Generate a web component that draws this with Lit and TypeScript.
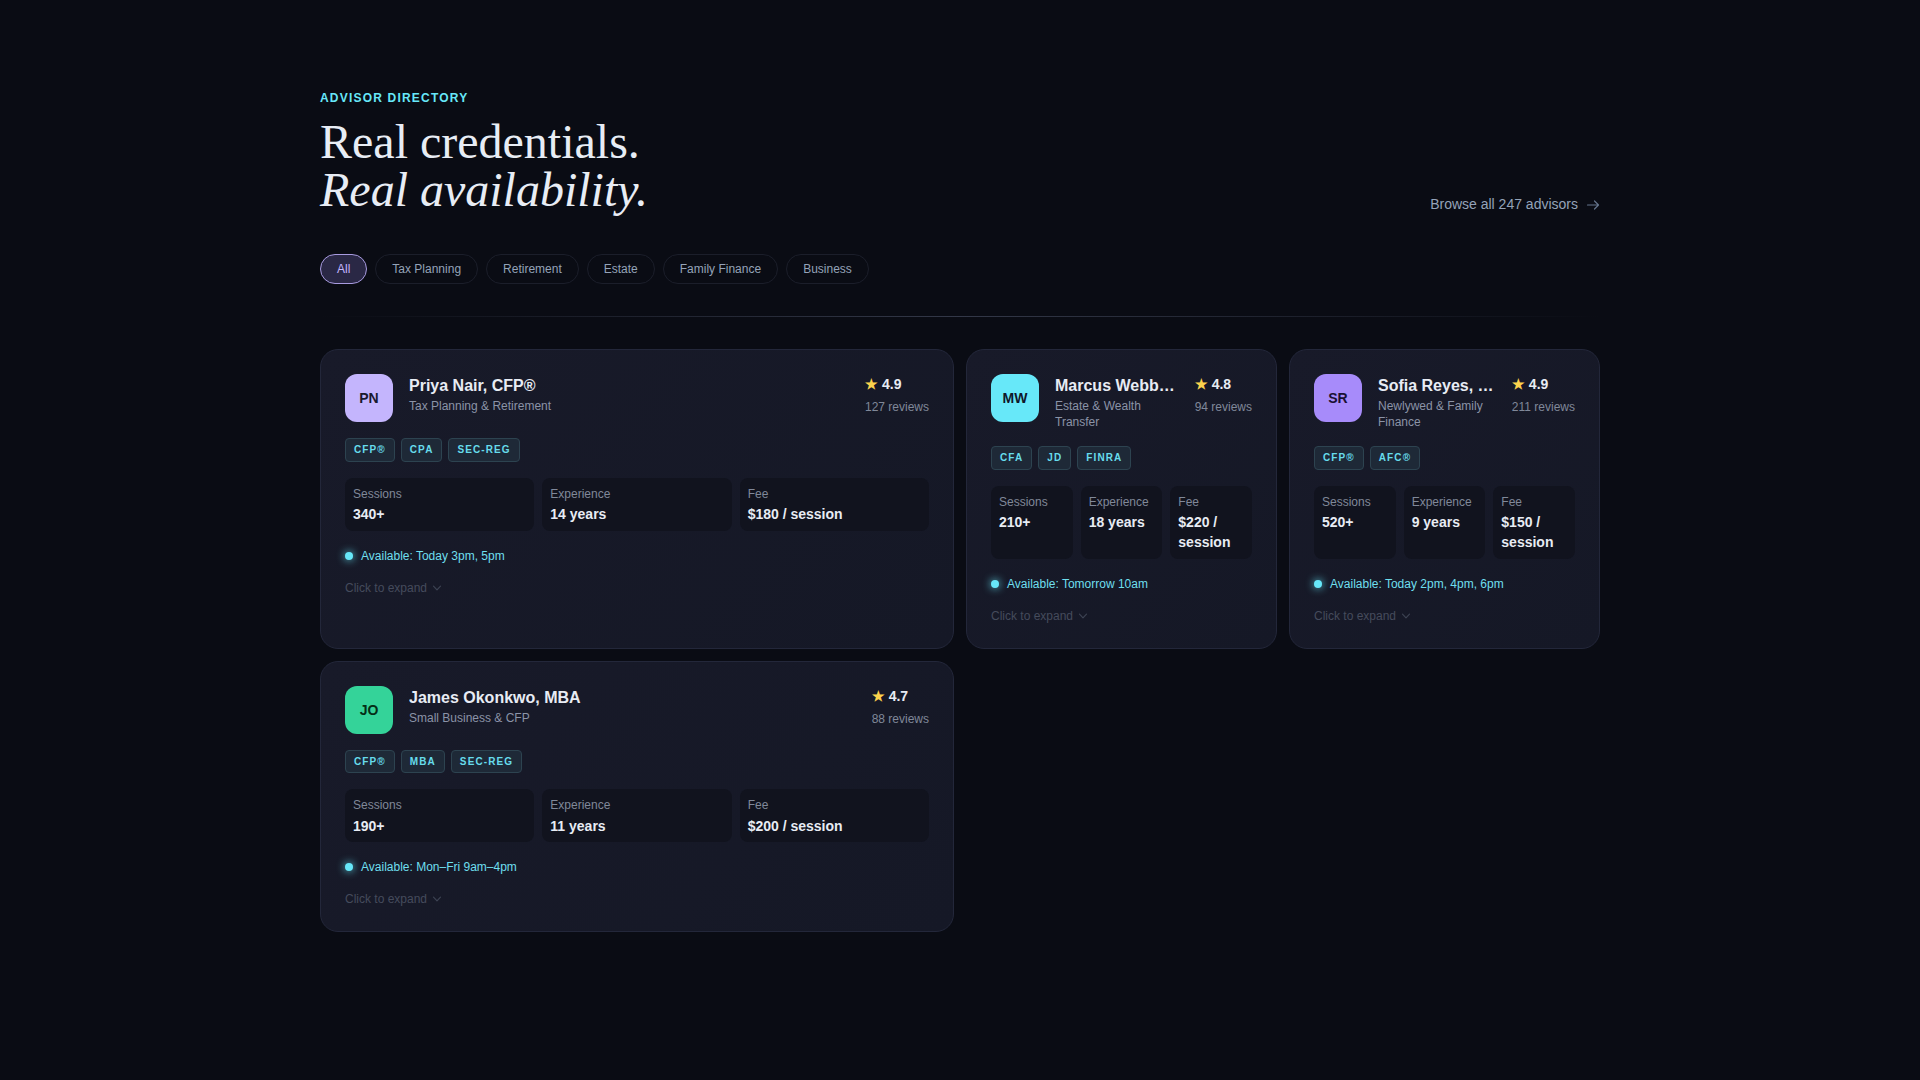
import { LitElement, html, css } from "lit";
import { customElement } from "lit/decorators.js";

interface Advisor {
  initials: string; color: string; ink: string; name: string; spec: string; rating: string; reviews: string;
  tags: string[]; sessions: string; years: string; fee: string; avail: string; wide: boolean;
}

const ADVISORS: Advisor[] = [
  { initials: "PN", color: "#c4b5fd", ink: "#1a1a2e", name: "Priya Nair, CFP®", spec: "Tax Planning & Retirement", rating: "4.9", reviews: "127 reviews", tags: ["CFP®", "CPA", "SEC-REG"], sessions: "340+", years: "14 years", fee: "$180 / session", avail: "Available: Today 3pm, 5pm", wide: true },
  { initials: "MW", color: "#67e8f9", ink: "#0f172a", name: "Marcus Webb, CFA, JD", spec: "Estate & Wealth Transfer", rating: "4.8", reviews: "94 reviews", tags: ["CFA", "JD", "FINRA"], sessions: "210+", years: "18 years", fee: "$220 / session", avail: "Available: Tomorrow 10am", wide: false },
  { initials: "SR", color: "#a78bfa", ink: "#1a1033", name: "Sofia Reyes, CFP®, AFC®", spec: "Newlywed & Family Finance", rating: "4.9", reviews: "211 reviews", tags: ["CFP®", "AFC®"], sessions: "520+", years: "9 years", fee: "$150 / session", avail: "Available: Today 2pm, 4pm, 6pm", wide: false },
  { initials: "JO", color: "#34d399", ink: "#052e16", name: "James Okonkwo, MBA", spec: "Small Business & CFP", rating: "4.7", reviews: "88 reviews", tags: ["CFP®", "MBA", "SEC-REG"], sessions: "190+", years: "11 years", fee: "$200 / session", avail: "Available: Mon–Fri 9am–4pm", wide: true },
];

const FILTERS = ["All", "Tax Planning", "Retirement", "Estate", "Family Finance", "Business"];

@customElement("app-root")
export class AppRoot extends LitElement {
  static styles = css`
    :host { display: block; min-height: 1080px; background: #0a0c14; color: #e2e8f0; font-family: "Liberation Sans", Arial, sans-serif; }
    .page { width: 1280px; margin: 0 auto; padding: 91px 0 0; }
    .top { display: flex; justify-content: space-between; align-items: flex-end; margin-bottom: 40px; }
    .eyebrow { font-size: 12px; line-height: 14px; font-weight: 700; letter-spacing: 1.2px; color: #67e8f9; margin-bottom: 13px; }
    h1 { margin: 0; font-family: "Liberation Serif", "Times New Roman", serif; font-weight: 400; font-size: 48px; line-height: 48px; color: #e8edf5; }
    h1 em { font-style: italic; display: block; }
    .browse { display: flex; align-items: center; gap: 8px; font-size: 14px; line-height: 19px; color: #94a3b8; }
    .browse svg { width: 14px; height: 14px; color: #64748b; }
    .filters { display: flex; gap: 8px; margin-bottom: 32px; }
    .pill { height: 30px; box-sizing: border-box; padding: 0 16px; display: flex; align-items: center; border-radius: 15px; border: 1px solid #1b1e2a; font-size: 12px; color: #94a3b8; }
    .pill.on { background: #2a2845; border-color: #a89be0; color: #c4b5fd; }
    .rule { height: 1px; background: linear-gradient(90deg, transparent, #333848 50%, transparent); margin-bottom: 32px; }
    .grid { display: grid; grid-template-columns: repeat(4, 1fr); gap: 12px; }
    .card { box-sizing: border-box; min-width: 0; padding: 24px; border-radius: 18px; border: 1px solid #23273a; background: linear-gradient(135deg, #181a29, #151826); }
    .card.wide { grid-column: span 2; }
    .head { display: flex; gap: 16px; align-items: flex-start; margin-bottom: 16px; }
    .avatar { flex: none; width: 48px; height: 48px; border-radius: 12px; display: flex; align-items: center; justify-content: center; font-size: 14px; font-weight: 700; }
    .who { flex: 1; min-width: 0; }
    .name { font-size: 16px; line-height: 24px; font-weight: 700; color: #e8ecf4; white-space: nowrap; overflow: hidden; text-overflow: ellipsis; }
    .spec { font-size: 12px; line-height: 16px; color: #8b93a7; }
    .score { flex: none; text-align: left; }
    .rating { display: flex; align-items: center; gap: 4px; font-size: 14px; line-height: 20px; font-weight: 700; color: #e8ecf4; margin-bottom: 5px; }
    .star { color: #fcd34d; font-size: 14px; }
    .reviews { font-size: 12px; line-height: 16px; color: #808899; }
    .tags { display: flex; gap: 6px; margin-bottom: 16px; }
    .tag { box-sizing: border-box; height: 23.5px; padding: 0 8px; display: flex; align-items: center; font-size: 10px; font-weight: 700; letter-spacing: 1.1px; color: #67dcec; background: #1e2937; border: 1px solid #2d4350; border-radius: 4px; }
    .stats { display: grid; grid-template-columns: repeat(3, 1fr); gap: 8px; margin-bottom: 16px; }
    .stat { padding: 9px 8px 6.6px; background: #11131e; border-radius: 8px; }
    .label { font-size: 12px; line-height: 15.6px; color: #808899; margin-bottom: 2px; }
    .value { font-size: 14px; line-height: 20px; font-weight: 700; color: #e8ecf4; }
    .avail { display: flex; align-items: center; gap: 8px; font-size: 12px; line-height: 18px; color: #6fdfee; margin-bottom: 15px; }
    .dot { width: 8px; height: 8px; border-radius: 50%; background: #67e8f9; box-shadow: 0 0 8px #67e8f9; }
    .expand { display: flex; align-items: center; gap: 4px; font-size: 12px; line-height: 16px; color: #454b5c; }
    .expand svg { width: 12px; height: 12px; color: #3c4252; }
  `;

  private card(a: Advisor) {
    return html`<article class="card ${a.wide ? "wide" : ""}">
      <div class="head">
        <div class="avatar" style="background:${a.color};color:${a.ink}">${a.initials}</div>
        <div class="who"><div class="name">${a.name}</div><div class="spec">${a.spec}</div></div>
        <div class="score"><div class="rating"><span class="star">★</span>${a.rating}</div><div class="reviews">${a.reviews}</div></div>
      </div>
      <div class="tags">${a.tags.map((t) => html`<span class="tag">${t}</span>`)}</div>
      <div class="stats">
        <div class="stat"><div class="label">Sessions</div><div class="value">${a.sessions}</div></div>
        <div class="stat"><div class="label">Experience</div><div class="value">${a.years}</div></div>
        <div class="stat"><div class="label">Fee</div><div class="value">${a.fee}</div></div>
      </div>
      <div class="avail"><span class="dot"></span>${a.avail}</div>
      <div class="expand">Click to expand
        <svg viewBox="0 0 12 12" fill="none" stroke="currentColor" stroke-width="1.2" stroke-linecap="round" stroke-linejoin="round"><path d="M2.5 4.2 6 7.8 9.5 4.2"/></svg>
      </div>
    </article>`;
  }

  render() {
    return html`<div class="page">
      <div class="top">
        <div>
          <div class="eyebrow">ADVISOR DIRECTORY</div>
          <h1>Real credentials.<em>Real availability.</em></h1>
        </div>
        <div class="browse">Browse all 247 advisors
          <svg viewBox="0 0 14 14" fill="none" stroke="currentColor" stroke-width="1.2" stroke-linecap="round" stroke-linejoin="round"><path d="M1.5 7h11M8.5 3 12.5 7 8.5 11"/></svg>
        </div>
      </div>
      <div class="filters">${FILTERS.map((f, i) => html`<div class="pill ${i === 0 ? "on" : ""}">${f}</div>`)}</div>
      <div class="rule"></div>
      <div class="grid">${ADVISORS.map((a) => this.card(a))}</div>
    </div>`;
  }
}
